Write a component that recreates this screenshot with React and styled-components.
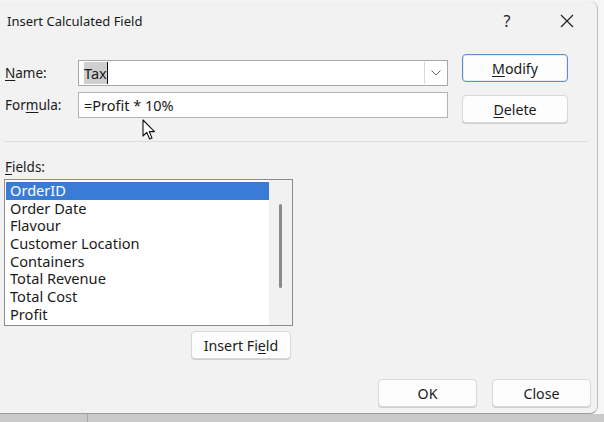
import styled, { createGlobalStyle } from 'styled-components';

const GlobalStyle = createGlobalStyle`
  html, body {
    margin: 0;
    padding: 0;
    background: #f4f4f4;
  }
  body {
    font-family: 'Noto Sans', 'Open Sans', sans-serif;
    color: #1a1a1a;
  }
`;

const Page = styled.div`
  position: relative;
  width: 604px;
  height: 422px;
  overflow: hidden;
  background: #f6f6f6;
  display: flex;
  flex-direction: column;
`;

const Dialog = styled.div`
  width: 598px;
  height: 413px;
  margin-top: 1px;
  box-sizing: border-box;
  background: #f2f2f2;
  border-right: 1px solid #bdbdbd;
  border-bottom: 1px solid #9c9c9c;
  border-radius: 0 8px 8px 0;
  display: flex;
  flex-direction: column;
`;

const Sheet = styled.div`
  flex: 1;
  background: #c9c9c9;
  background-image: linear-gradient(90deg, transparent 87px, #a9a9a9 87px, #a9a9a9 88px, transparent 88px);
`;

const TitleBar = styled.div`
  height: 40px;
  display: flex;
  align-items: center;
  padding-left: 7px;
  font-size: 13px;
`;

const Title = styled.div`
  flex: 1;
`;

const TitleButton = styled.div`
  width: 60px;
  height: 40px;
  display: flex;
  align-items: center;
  justify-content: center;
  font-size: 16px;
  color: #222;
`;

const Body = styled.div`
  flex: 1;
  padding: 0 6px 0 4px;
  display: flex;
  flex-direction: column;
`;

const TopSection = styled.div`
  display: flex;
  gap: 14px;
`;

const FormColumn = styled.div`
  padding-top: 19px;
  display: flex;
  flex-direction: column;
  gap: 6px;
`;

const FormRow = styled.div`
  display: flex;
  align-items: center;
  font-size: 13.5px;
`;

const Label = styled.div`
  width: 74px;
  padding-left: 1px;
  box-sizing: border-box;
`;

const Key = styled.span`
  text-decoration: underline;
  text-underline-offset: 2px;
`;

const TextBox = styled.div`
  width: 370px;
  height: 26px;
  box-sizing: border-box;
  background: #ffffff;
  border: 1px solid ${(p) => (p.$combo ? '#a8a8a8' : '#b4b4b4')};
  display: flex;
  align-items: center;
  padding-left: 5px;
  font-size: 14.5px;
`;

const Selected = styled.span`
  background: #cfcfcf;
  padding: 1px 0;
  border-right: 1px solid #111;
`;

const Value = styled.span`
  flex: 1;
`;

const DropButton = styled.div`
  width: 22px;
  height: 22px;
  margin-right: 1px;
  box-sizing: border-box;
  border-left: 1px solid #dadada;
  display: flex;
  align-items: center;
  justify-content: center;
`;

const ButtonColumn = styled.div`
  padding-top: 13px;
  display: flex;
  flex-direction: column;
  gap: 13px;
`;

const Button = styled.div`
  width: ${(p) => p.$w || 106}px;
  height: 28px;
  box-sizing: border-box;
  background: #fdfdfd;
  border: 1px solid ${(p) => (p.$primary ? '#5a8fc9' : '#d8d8d8')};
  box-shadow: ${(p) => (p.$primary ? 'inset 0 0 0 1px #e2ecf7' : '0 1px 0 #cfcfcf')};
  border-radius: 4px;
  display: flex;
  align-items: center;
  justify-content: center;
  font-size: 14.2px;
  color: #1a1a1a;
`;

const Separator = styled.div`
  height: 1px;
  background: #dedede;
  margin: 18px 3px 0 0;
`;

const FieldsLabel = styled.div`
  margin-top: 16px;
  padding-left: 1px;
  font-size: 13.5px;
  height: 21px;
`;

const ListBox = styled.div`
  width: 289px;
  height: 147px;
  box-sizing: border-box;
  border: 1px solid #8c8c8c;
  background: #ffffff;
  display: flex;
`;

const Items = styled.div`
  flex: 1;
  padding: 2px 0 0 1px;
`;

const Item = styled.div`
  height: 17.7px;
  line-height: 17.7px;
  padding-left: 4px;
  font-size: 14.6px;
  background: ${(p) => (p.$active ? '#3a7bd7' : 'transparent')};
  color: ${(p) => (p.$active ? '#ffffff' : '#1a1a1a')};
`;

const ScrollTrack = styled.div`
  width: 23px;
  background: #f1f1f1;
  display: flex;
  justify-content: center;
  padding-top: 24px;
  box-sizing: border-box;
`;

const ScrollThumb = styled.div`
  width: 3px;
  height: 84px;
  border-radius: 2px;
  background: #8a8a8a;
`;

const InsertRow = styled.div`
  width: 289px;
  display: flex;
  justify-content: flex-end;
  margin-top: 5px;
  padding-right: 2px;
  box-sizing: border-box;
`;

const Footer = styled.div`
  margin-top: auto;
  margin-bottom: 6px;
  display: flex;
  justify-content: flex-end;
  gap: 15px;
`;

const Cursor = styled.svg`
  position: absolute;
  left: 142px;
  top: 119px;
`;

const fields = [
  'OrderID',
  'Order Date',
  'Flavour',
  'Customer Location',
  'Containers',
  'Total Revenue',
  'Total Cost',
  'Profit',
];

export default function App() {
  return (
    <Page>
      <GlobalStyle />
      <Dialog>
        <TitleBar>
          <Title>Insert Calculated Field</Title>
          <TitleButton>?</TitleButton>
          <TitleButton>
            <svg width="14" height="14" viewBox="0 0 14 14">
              <path d="M1 1 L13 13 M13 1 L1 13" stroke="#222" strokeWidth="1.2" />
            </svg>
          </TitleButton>
        </TitleBar>
        <Body>
          <TopSection>
            <FormColumn>
              <FormRow>
                <Label>
                  <Key>N</Key>ame:
                </Label>
                <TextBox $combo>
                  <Value>
                    <Selected>Tax</Selected>
                  </Value>
                  <DropButton>
                    <svg width="10" height="6" viewBox="0 0 10 6">
                      <path d="M0.5 0.5 L5 5 L9.5 0.5" fill="none" stroke="#666" strokeWidth="1" />
                    </svg>
                  </DropButton>
                </TextBox>
              </FormRow>
              <FormRow>
                <Label>
                  For<Key>m</Key>ula:
                </Label>
                <TextBox>=Profit * 10%</TextBox>
              </FormRow>
            </FormColumn>
            <ButtonColumn>
              <Button $primary>
                <span>
                  <Key>M</Key>odify
                </span>
              </Button>
              <Button>
                <span>
                  <Key>D</Key>elete
                </span>
              </Button>
            </ButtonColumn>
          </TopSection>
          <Separator />
          <FieldsLabel>
            <Key>F</Key>ields:
          </FieldsLabel>
          <ListBox>
            <Items>
              {fields.map((f, i) => (
                <Item key={f} $active={i === 0}>
                  {f}
                </Item>
              ))}
            </Items>
            <ScrollTrack>
              <ScrollThumb />
            </ScrollTrack>
          </ListBox>
          <InsertRow>
            <Button $w={100}>
              <span>
                Insert Fi<Key>e</Key>ld
              </span>
            </Button>
          </InsertRow>
          <Footer>
            <Button $w={99}>OK</Button>
            <Button $w={99}>Close</Button>
          </Footer>
        </Body>
      </Dialog>
      <Sheet />
      <Cursor width="14" height="22" viewBox="0 0 14 22">
        <path
          d="M1 1 L1 17 L4.8 13.4 L7.6 20 L10 19 L7.3 12.6 L12.5 12.6 Z"
          fill="#ffffff"
          stroke="#111"
          strokeWidth="1.1"
          strokeLinejoin="round"
        />
      </Cursor>
    </Page>
  );
}
